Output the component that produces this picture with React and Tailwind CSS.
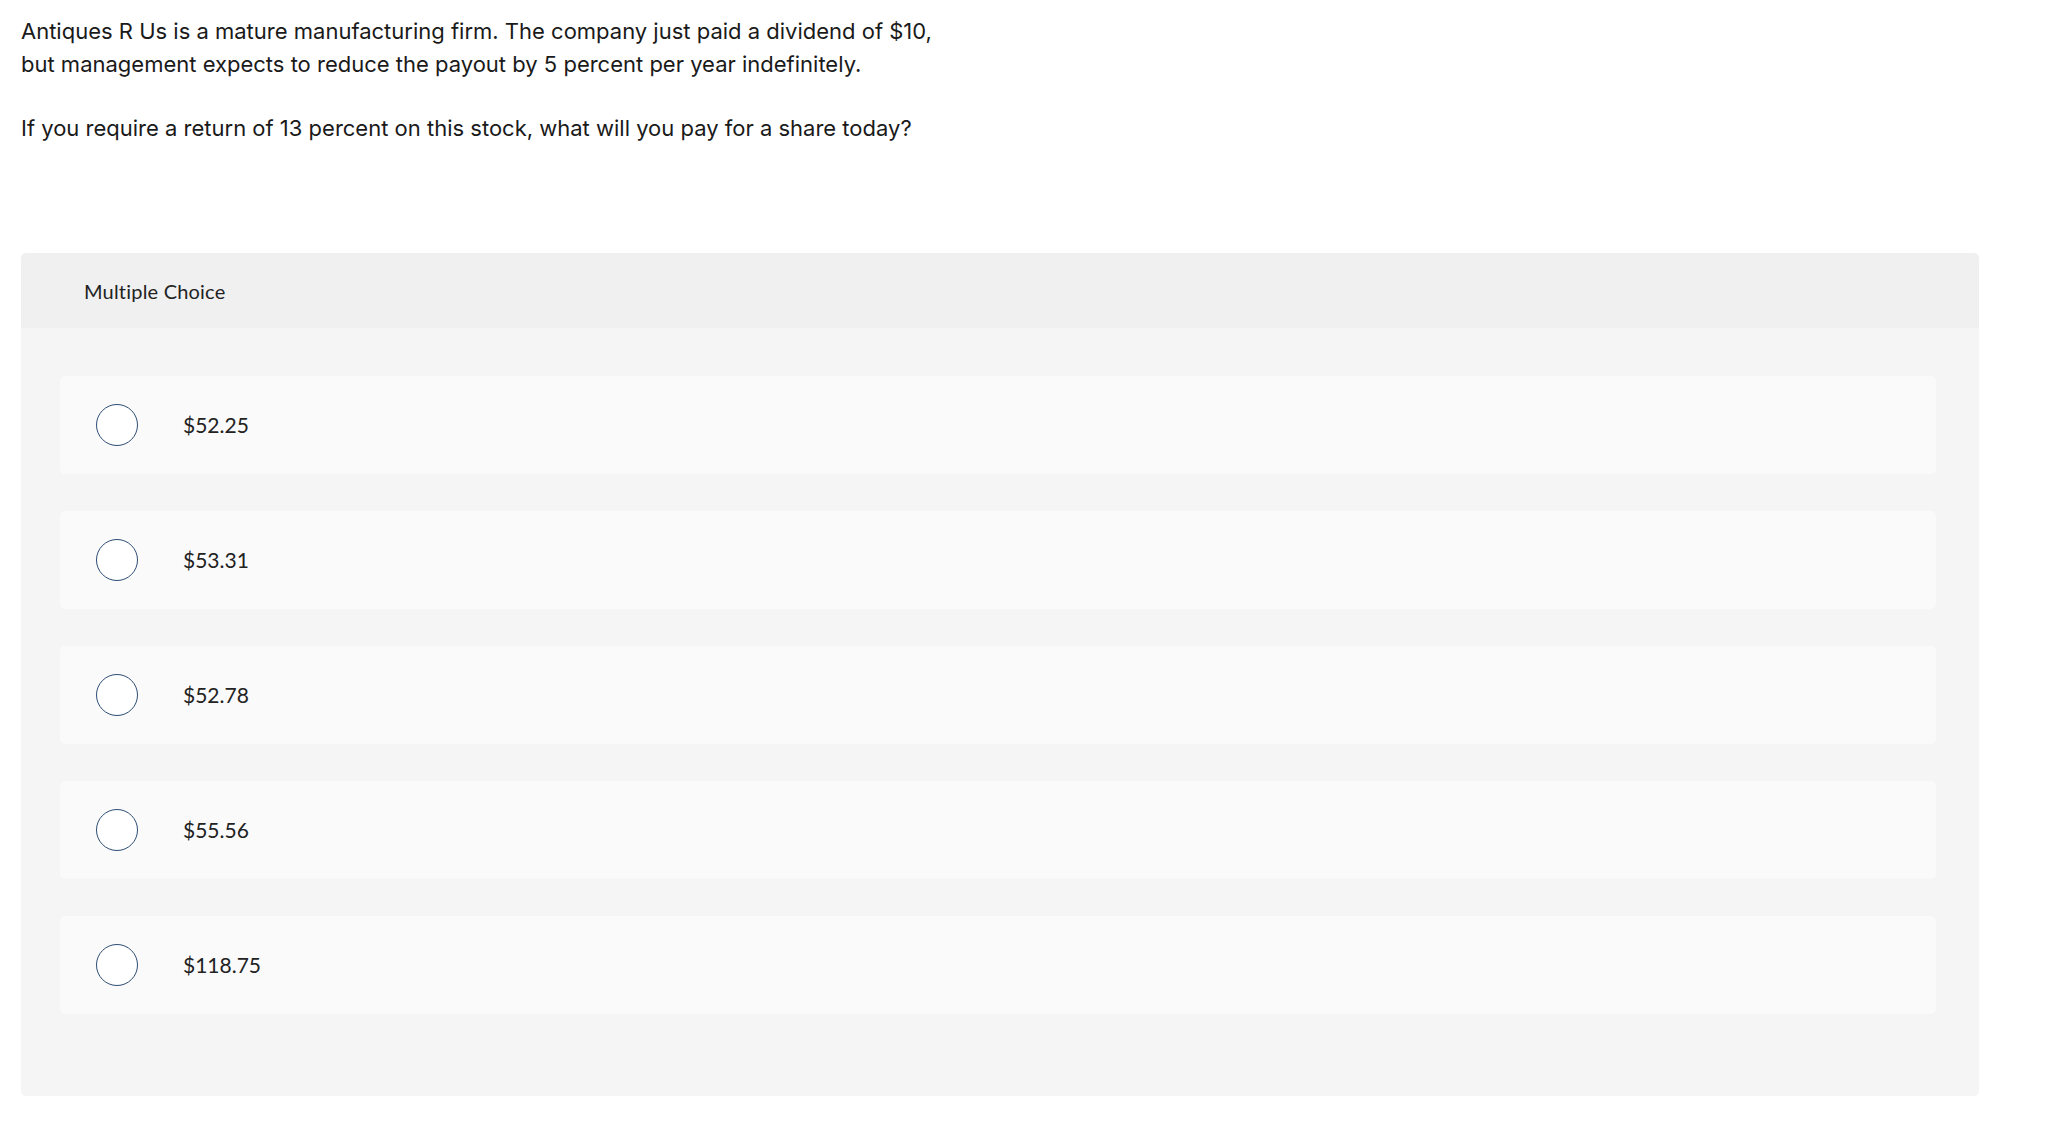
import React from "react";

const choices = ["$52.25", "$53.31", "$52.78", "$55.56", "$118.75"];

export default function App() {
  return (
    <div
      className="min-h-screen bg-white text-[#1a1a1a]"
      style={{ fontFamily: "Lato, 'Noto Sans', sans-serif" }}
    >
      <div className="px-[21px] pt-[15px]">
        <div
          className="text-[22px] leading-[33px]"
          style={{ fontFamily: "Inter, 'Noto Sans', sans-serif" }}
        >
          <p>
            Antiques R Us is a mature manufacturing firm. The company just paid a dividend of $10,
            <br />
            but management expects to reduce the payout by 5 percent per year indefinitely.
          </p>
          <p className="mt-[31px]">
            If you require a return of 13 percent on this stock, what will you pay for a share today?
          </p>
        </div>

        <div className="mt-[108px] w-[1958px] rounded-[5px] bg-[#f5f5f5] overflow-hidden">
          <div className="h-[75px] bg-[#f0f0f0] flex items-center pl-[63px] text-[20px] tracking-[0.2px] text-[#222]">
            Multiple Choice
          </div>
          <div className="pl-[39px] pr-[43px] pt-[48px] pb-[82px] flex flex-col gap-[37px]">
            {choices.map((c) => (
              <div
                key={c}
                className="h-[98px] rounded-[5px] bg-[#fafafa] flex items-center pl-[36px]"
              >
                <div className="w-[42px] h-[42px] rounded-full border-[1.5px] border-[#2e4d74] bg-white shrink-0" />
                <span className="ml-[45px] text-[21px] text-[#222]">{c}</span>
              </div>
            ))}
          </div>
        </div>
      </div>
    </div>
  );
}
